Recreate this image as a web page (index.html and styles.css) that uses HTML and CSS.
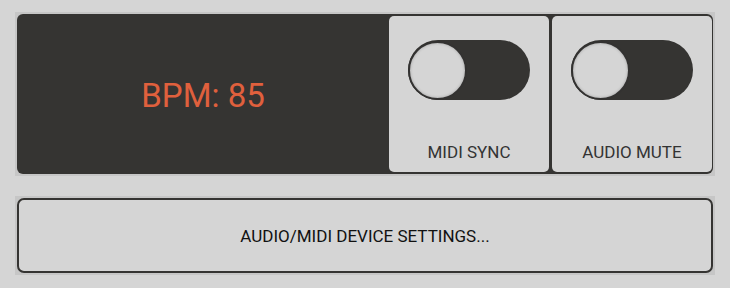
FILE: index.html
```html
<!DOCTYPE html>
<html>
<head>
<meta charset="utf-8">
<link rel="stylesheet" href="styles.css">
</head>
<body>
<div class="frame top-frame">
  <div class="panel">
    <div class="bpm">BPM: 85</div>
    <div class="card">
      <div class="toggle"><div class="knob"></div></div>
      <div class="label">MIDI SYNC</div>
    </div>
    <div class="card last">
      <div class="toggle"><div class="knob"></div></div>
      <div class="label">AUDIO MUTE</div>
    </div>
  </div>
</div>
<div class="frame bottom-frame">
  <div class="button">AUDIO/MIDI DEVICE SETTINGS...</div>
</div>
</body>
</html>
```

FILE: styles.css
```css
html, body {
  margin: 0;
  padding: 0;
  background: #d5d5d5;
}
body {
  padding: 12px 15px;
  font-family: Roboto, "Liberation Sans", sans-serif;
}
.frame {
  width: 700px;
  box-sizing: border-box;
  padding: 2px;
  background: #c6c6c6;
}
.top-frame {
  height: 164px;
}
.bottom-frame {
  height: 79px;
  margin-top: 20px;
}
.panel {
  height: 100%;
  background: #353432;
  border-radius: 6px;
  display: flex;
  padding: 2px 1px 2px 0;
  box-sizing: border-box;
}
.bpm {
  width: 372px;
  display: flex;
  align-items: center;
  justify-content: center;
  color: #e0603d;
  font-size: 33px;
  padding-top: 2px;
  box-sizing: border-box;
}
.card {
  width: 160px;
  height: 156px;
  background: #d5d5d5;
  border-radius: 5px;
  display: flex;
  flex-direction: column;
  align-items: center;
  padding-top: 24px;
  box-sizing: border-box;
}
.card.last {
  margin-left: 3px;
}
.toggle {
  width: 122px;
  height: 60px;
  border-radius: 30px;
  background: #353432;
  display: flex;
  align-items: center;
}
.knob {
  width: 59px;
  height: 59px;
  box-sizing: border-box;
  border-radius: 50%;
  border: 2px solid #333231;
  background: #d5d5d5;
  box-shadow: inset 0 0 3px rgba(0,0,0,0.25);
}
.label {
  margin-top: auto;
  margin-bottom: 10px;
  font-size: 17px;
  color: #333;
  line-height: 20px;
}
.button {
  height: 100%;
  box-sizing: border-box;
  border: 2px solid #353432;
  border-radius: 7px;
  background: #d5d5d5;
  display: flex;
  align-items: center;
  justify-content: center;
  font-size: 17px;
  color: #111;
}
```
